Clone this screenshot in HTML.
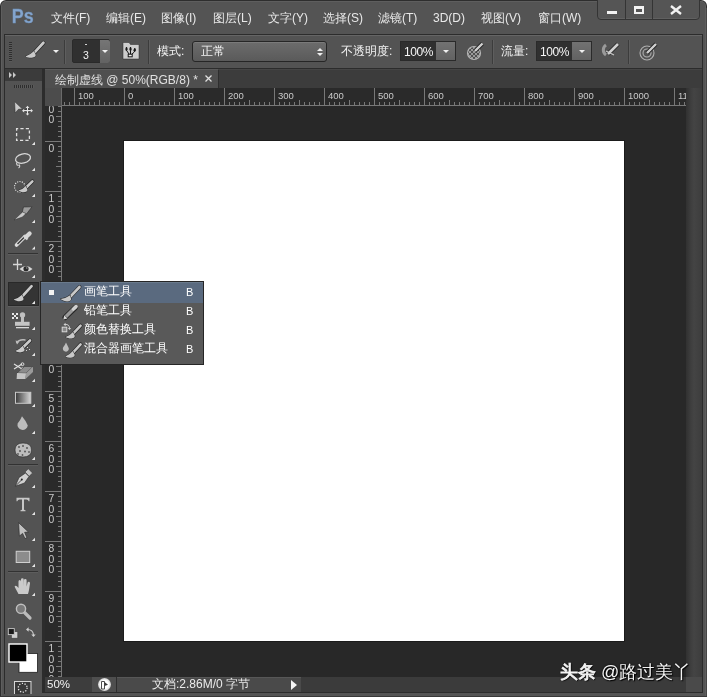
<!DOCTYPE html>
<html><head><meta charset="utf-8">
<style>
*{margin:0;padding:0;box-sizing:border-box}
html,body{width:707px;height:697px;overflow:hidden;background:#ffffff;font-family:'Liberation Sans', sans-serif;}
body{will-change:transform}
.lbl,.menu{will-change:transform}
.a{position:absolute}
.menu{position:absolute;top:11px;font-size:12px;color:#e9e9e9;white-space:nowrap;line-height:14px}
.lbl{position:absolute;font-size:12px;color:#f2f2f2;white-space:nowrap;line-height:14px}
.tri{position:absolute;width:0;height:0;border-left:3px solid transparent;border-bottom:3px solid #dcdcdc}
</style></head><body>

<div class="a" style="left:0;top:0;width:707px;height:697px;background:#2e2e2e;border-radius:6px 6px 0 0"></div>
<div class="a" style="left:1px;top:1px;width:705px;height:696px;background:#5e5e5e;border-radius:5px 5px 0 0"></div>
<div class="a" style="left:2px;top:2px;width:703px;height:695px;background:#545454;border-radius:4px 4px 0 0"></div>
<div class="a" style="left:706px;top:8px;width:1px;height:689px;background:#464646"></div>
<div class="a" style="left:0px;top:696px;width:707px;height:1px;background:#383838"></div>
<div class="menu" style="left:51px">文件(F)</div>
<div class="menu" style="left:106px">编辑(E)</div>
<div class="menu" style="left:161px">图像(I)</div>
<div class="menu" style="left:213px">图层(L)</div>
<div class="menu" style="left:268px">文字(Y)</div>
<div class="menu" style="left:323px">选择(S)</div>
<div class="menu" style="left:378px">滤镜(T)</div>
<div class="menu" style="left:433px">3D(D)</div>
<div class="menu" style="left:481px">视图(V)</div>
<div class="menu" style="left:538px">窗口(W)</div>
<svg class="a" style="left:0;top:0" width="40" height="30"><text x="14.2" y="22.8" font-family="Liberation Sans" font-weight="bold" font-size="20.8" fill="#84a5cd" stroke="#6d8fba" stroke-width="0.4" transform="translate(11.8 0) scale(0.86 1) translate(-14.2 0)">Ps</text></svg>
<div class="a" style="left:597px;top:-4px;width:103px;height:24px;border:1px solid #343434;border-radius:0 0 4px 4px;background:#555555;box-shadow:inset 0 -1px 0 #606060"></div>
<div class="a" style="left:625px;top:0;width:1px;height:19px;background:#343434"></div>
<div class="a" style="left:652px;top:0;width:1px;height:19px;background:#343434"></div>
<div class="a" style="left:607px;top:11px;width:10px;height:3px;background:#f2f2f2"></div>
<div class="a" style="left:634px;top:6px;width:10px;height:8px;border:2px solid #f2f2f2;border-top-width:3px"></div>
<svg class="a" style="left:669px;top:5px" width="14" height="10"><path d="M2 1 L12 9 M12 1 L2 9" stroke="#f2f2f2" stroke-width="2.4"/></svg>
<div class="a" style="left:4px;top:34px;width:699px;height:1px;background:#2c2c2c"></div>
<div class="a" style="left:4px;top:34px;width:1px;height:660px;background:#2c2c2c"></div>
<div class="a" style="left:702px;top:34px;width:1px;height:659px;background:#2c2c2c"></div>
<div class="a" style="left:42px;top:692px;width:661px;height:1px;background:#2c2c2c"></div>
<div class="a" style="left:5px;top:35px;width:697px;height:33px;background:#535353"></div>
<div class="a" style="left:5px;top:35px;width:697px;height:1px;background:#656565"></div>
<div class="a" style="left:4px;top:68px;width:699px;height:1px;background:#2c2c2c"></div>
<div class="a" style="left:9px;top:42px;width:3px;height:20px;background:repeating-linear-gradient(180deg,#2e2e2e 0,#2e2e2e 1px,#5a5a5a 1px,#5a5a5a 2px)"></div>
<svg class="a" style="left:0;top:0" width="70" height="68"><path d="M43.4 42.8 L34.6 52.4" stroke="#262626" stroke-width="4.1" stroke-linecap="round"/><path d="M43.4 42.8 L34.6 52.4" stroke="#c9c9c9" stroke-width="2.8" stroke-linecap="round"/><path d="M34.04 51.12 Q30.66 54.66 25.4 56.4 C29.83 59.05 36.37 57.74 35.64 54.78 Z" fill="#262626" stroke="#262626" stroke-width="0.9"/><path d="M34.04 51.12 Q30.66 54.66 25.4 56.4 C29.83 59.05 36.37 57.74 35.64 54.78 Z" fill="#c9c9c9"/></svg>
<div class="a" style="left:53px;top:50px;width:0;height:0;border-left:3px solid transparent;border-right:3px solid transparent;border-top:3px solid #f0f0f0"></div>
<div class="a" style="left:64px;top:40px;width:1px;height:24px;background:#3c3c3c"></div><div class="a" style="left:65px;top:40px;width:1px;height:24px;background:#5e5e5e"></div>
<div class="a" style="left:148px;top:40px;width:1px;height:24px;background:#3c3c3c"></div><div class="a" style="left:149px;top:40px;width:1px;height:24px;background:#5e5e5e"></div>
<div class="a" style="left:492px;top:40px;width:1px;height:24px;background:#3c3c3c"></div><div class="a" style="left:493px;top:40px;width:1px;height:24px;background:#5e5e5e"></div>
<div class="a" style="left:628px;top:40px;width:1px;height:24px;background:#3c3c3c"></div><div class="a" style="left:629px;top:40px;width:1px;height:24px;background:#5e5e5e"></div>
<div class="a" style="left:72px;top:39px;width:38px;height:24px;background:#303030;border:1px solid #2a2a2a;border-radius:2px"></div>
<div class="a" style="left:100px;top:40px;width:10px;height:23px;background:linear-gradient(#767676,#626262);border-radius:0 2px 2px 0"></div>
<div class="a" style="left:102px;top:50px;width:0;height:0;border-left:3px solid transparent;border-right:3px solid transparent;border-top:3px solid #f0f0f0"></div>
<div class="a" style="left:85px;top:43.5px;width:1.5px;height:1.5px;background:#d0d0d0"></div>
<div class="lbl" style="left:83px;top:47.5px;font-size:10.5px;color:#f4f4f4">3</div>
<svg class="a" style="left:0;top:0" width="150" height="68"><path d="M123 42.5 H129 L130.5 44.5 H139 V59 H123 Z" fill="#cdcdcd" stroke="#2a2a2a" stroke-width="0.5"/><path d="M126.5 47 Q125 49.5 126.5 51 Q128 49.5 126.5 47 Z M130.5 47 Q129 49.5 130.5 51 Q132 49.5 130.5 47 Z M134.8 48.2 Q133 50.5 134.5 51.8 Q136.5 50.5 134.8 48.2 Z" fill="#141414" stroke="#141414" stroke-width="0.9"/><path d="M127 51 L129 54 M130.5 51 V54 M134.3 52 L131.5 54.5" stroke="#141414" stroke-width="1"/><rect x="128.2" y="54.2" width="4" height="2.6" fill="#f0f0f0" stroke="#141414" stroke-width="1"/></svg>
<div class="lbl" style="left:157px;top:44px">模式:</div>
<div class="a" style="left:192px;top:41px;width:135px;height:21px;border:1px solid #262626;border-radius:3px;background:linear-gradient(#6c6c6c,#5a5a5a);box-shadow:inset 0 1px 0 #7a7a7a"></div>
<div class="lbl" style="left:201px;top:44px;color:#f2f2f2">正常</div>
<div class="a" style="left:317px;top:48px;width:0;height:0;border-left:3px solid transparent;border-right:3px solid transparent;border-bottom:3px solid #f0f0f0"></div>
<div class="a" style="left:317px;top:53px;width:0;height:0;border-left:3px solid transparent;border-right:3px solid transparent;border-top:3px solid #f0f0f0"></div>
<div class="lbl" style="left:341px;top:44px">不透明度:</div>
<div class="a" style="left:400px;top:41px;width:56px;height:20px;background:#303030;border:1px solid #2a2a2a"></div>
<div class="a" style="left:436px;top:42px;width:19px;height:18px;background:linear-gradient(#727272,#626262)"></div>
<div class="a" style="left:443px;top:50px;width:0;height:0;border-left:3px solid transparent;border-right:3px solid transparent;border-top:3px solid #f0f0f0"></div>
<div class="lbl" style="left:404px;top:45px;color:#f6f6f6;font-size:12px;letter-spacing:-0.4px">100%</div>
<svg class="a" style="left:465px;top:41px" width="22" height="21"><defs><pattern id="ck" width="4" height="4" patternUnits="userSpaceOnUse"><rect width="4" height="4" fill="#9a9a9a"/><rect width="2" height="2" fill="#505050"/><rect x="2" y="2" width="2" height="2" fill="#505050"/></pattern></defs><circle cx="9" cy="12" r="6.5" fill="url(#ck)" stroke="#b5b5b5" stroke-width="1.2"/><path d="M10 10 L17.5 2.5" stroke="#222" stroke-width="4"/><path d="M10 10 L17.5 2.5" stroke="#d0d0d0" stroke-width="2.4"/></svg>
<div class="lbl" style="left:501px;top:44px">流量:</div>
<div class="a" style="left:536px;top:41px;width:56px;height:20px;background:#303030;border:1px solid #2a2a2a"></div>
<div class="a" style="left:572px;top:42px;width:19px;height:18px;background:linear-gradient(#727272,#626262)"></div>
<div class="a" style="left:579px;top:50px;width:0;height:0;border-left:3px solid transparent;border-right:3px solid transparent;border-top:3px solid #f0f0f0"></div>
<div class="lbl" style="left:540px;top:45px;color:#f6f6f6;font-size:12px;letter-spacing:-0.4px">100%</div>
<svg class="a" style="left:600px;top:42px" width="22" height="16"><path d="M6 3 A6 6 0 0 0 6 13" stroke="#9a9a9a" stroke-width="3" fill="none"/><path d="M8 12 L18 2" stroke="#222" stroke-width="4.2"/><path d="M8 12 L18 2" stroke="#d0d0d0" stroke-width="2.6"/><path d="M6 9 L14 13" stroke="#c8c8c8" stroke-width="1.2"/></svg>
<svg class="a" style="left:638px;top:42px" width="22" height="20"><circle cx="9" cy="11" r="7" stroke="#b0b0b0" stroke-width="1.1" fill="none"/><circle cx="9" cy="11" r="4" stroke="#b0b0b0" stroke-width="1.1" fill="none"/><path d="M9 11 L18 2" stroke="#222" stroke-width="4"/><path d="M9 11 L18 2" stroke="#d0d0d0" stroke-width="2.4"/></svg>
<div class="a" style="left:5px;top:69px;width:37px;height:627px;background:#535353"></div>
<div class="a" style="left:5px;top:69px;width:37px;height:12px;background:#3b3b3b"></div>
<svg class="a" style="left:8px;top:71px" width="12" height="8"><path d="M1 1 L4 4 L1 7 Z M5 1 L8 4 L5 7 Z" fill="#c8c8c8"/></svg>
<div class="a" style="left:14px;top:85px;width:20px;height:3px;background:repeating-linear-gradient(90deg,#2e2e2e 0,#2e2e2e 1px,#5a5a5a 1px,#5a5a5a 2px)"></div>
<div class="a" style="left:42px;top:69px;width:3px;height:623px;background:#2c2c2c"></div>
<div class="a" style="left:45px;top:69px;width:657px;height:19px;background:#3c3c3c;border-top:1px solid #454545"></div>
<div class="a" style="left:45px;top:69px;width:174px;height:19px;background:#4f4f4f;border-top:1px solid #5a5a5a;border-right:1px solid #2e2e2e"></div>
<div class="lbl" style="left:55px;top:73px;color:#e0e0e0">绘制虚线 @ 50%(RGB/8) *</div>
<svg class="a" style="left:205px;top:75px" width="7" height="7"><path d="M0.5 0.5 L6.5 6.5 M6.5 0.5 L0.5 6.5" stroke="#e0e0e0" stroke-width="1.3"/></svg>
<div class="a" style="left:61px;top:106px;width:625px;height:571px;background:#282828"></div>
<div class="a" style="left:123px;top:140px;width:502px;height:502px;background:#1b1b1b"></div>
<div class="a" style="left:124px;top:141px;width:500px;height:500px;background:#ffffff"></div>
<div class="a" style="left:45px;top:88px;width:16px;height:18px;background:#4c4c4c"></div>
<svg class="a" style="left:61px;top:88px" width="625" height="18"><rect x="0" y="0" width="625" height="18" fill="#2a2a2a"/><rect x="0" y="17" width="625" height="1" fill="#787878"/><rect x="0" y="0" width="1" height="18" fill="#6a6a6a"/><rect x="3" y="14" width="1" height="4" fill="#787878"/><rect x="8" y="14" width="1" height="4" fill="#787878"/><rect x="13" y="0" width="1" height="18" fill="#787878"/><text x="17" y="10.5" fill="#cacaca" font-size="9.5" font-family="Liberation Sans">100</text><rect x="18" y="14" width="1" height="4" fill="#787878"/><rect x="23" y="14" width="1" height="4" fill="#787878"/><rect x="28" y="14" width="1" height="4" fill="#787878"/><rect x="33" y="14" width="1" height="4" fill="#787878"/><rect x="38" y="12" width="1" height="6" fill="#787878"/><rect x="43" y="14" width="1" height="4" fill="#787878"/><rect x="48" y="14" width="1" height="4" fill="#787878"/><rect x="53" y="14" width="1" height="4" fill="#787878"/><rect x="58" y="14" width="1" height="4" fill="#787878"/><rect x="63" y="0" width="1" height="18" fill="#787878"/><text x="67" y="10.5" fill="#cacaca" font-size="9.5" font-family="Liberation Sans">0</text><rect x="68" y="14" width="1" height="4" fill="#787878"/><rect x="73" y="14" width="1" height="4" fill="#787878"/><rect x="78" y="14" width="1" height="4" fill="#787878"/><rect x="83" y="14" width="1" height="4" fill="#787878"/><rect x="88" y="12" width="1" height="6" fill="#787878"/><rect x="93" y="14" width="1" height="4" fill="#787878"/><rect x="98" y="14" width="1" height="4" fill="#787878"/><rect x="103" y="14" width="1" height="4" fill="#787878"/><rect x="108" y="14" width="1" height="4" fill="#787878"/><rect x="113" y="0" width="1" height="18" fill="#787878"/><text x="117" y="10.5" fill="#cacaca" font-size="9.5" font-family="Liberation Sans">100</text><rect x="118" y="14" width="1" height="4" fill="#787878"/><rect x="123" y="14" width="1" height="4" fill="#787878"/><rect x="128" y="14" width="1" height="4" fill="#787878"/><rect x="133" y="14" width="1" height="4" fill="#787878"/><rect x="138" y="12" width="1" height="6" fill="#787878"/><rect x="143" y="14" width="1" height="4" fill="#787878"/><rect x="148" y="14" width="1" height="4" fill="#787878"/><rect x="153" y="14" width="1" height="4" fill="#787878"/><rect x="158" y="14" width="1" height="4" fill="#787878"/><rect x="163" y="0" width="1" height="18" fill="#787878"/><text x="167" y="10.5" fill="#cacaca" font-size="9.5" font-family="Liberation Sans">200</text><rect x="168" y="14" width="1" height="4" fill="#787878"/><rect x="173" y="14" width="1" height="4" fill="#787878"/><rect x="178" y="14" width="1" height="4" fill="#787878"/><rect x="183" y="14" width="1" height="4" fill="#787878"/><rect x="188" y="12" width="1" height="6" fill="#787878"/><rect x="193" y="14" width="1" height="4" fill="#787878"/><rect x="198" y="14" width="1" height="4" fill="#787878"/><rect x="203" y="14" width="1" height="4" fill="#787878"/><rect x="208" y="14" width="1" height="4" fill="#787878"/><rect x="213" y="0" width="1" height="18" fill="#787878"/><text x="217" y="10.5" fill="#cacaca" font-size="9.5" font-family="Liberation Sans">300</text><rect x="218" y="14" width="1" height="4" fill="#787878"/><rect x="223" y="14" width="1" height="4" fill="#787878"/><rect x="228" y="14" width="1" height="4" fill="#787878"/><rect x="233" y="14" width="1" height="4" fill="#787878"/><rect x="238" y="12" width="1" height="6" fill="#787878"/><rect x="243" y="14" width="1" height="4" fill="#787878"/><rect x="248" y="14" width="1" height="4" fill="#787878"/><rect x="253" y="14" width="1" height="4" fill="#787878"/><rect x="258" y="14" width="1" height="4" fill="#787878"/><rect x="263" y="0" width="1" height="18" fill="#787878"/><text x="267" y="10.5" fill="#cacaca" font-size="9.5" font-family="Liberation Sans">400</text><rect x="268" y="14" width="1" height="4" fill="#787878"/><rect x="273" y="14" width="1" height="4" fill="#787878"/><rect x="278" y="14" width="1" height="4" fill="#787878"/><rect x="283" y="14" width="1" height="4" fill="#787878"/><rect x="288" y="12" width="1" height="6" fill="#787878"/><rect x="293" y="14" width="1" height="4" fill="#787878"/><rect x="298" y="14" width="1" height="4" fill="#787878"/><rect x="303" y="14" width="1" height="4" fill="#787878"/><rect x="308" y="14" width="1" height="4" fill="#787878"/><rect x="313" y="0" width="1" height="18" fill="#787878"/><text x="317" y="10.5" fill="#cacaca" font-size="9.5" font-family="Liberation Sans">500</text><rect x="318" y="14" width="1" height="4" fill="#787878"/><rect x="323" y="14" width="1" height="4" fill="#787878"/><rect x="328" y="14" width="1" height="4" fill="#787878"/><rect x="333" y="14" width="1" height="4" fill="#787878"/><rect x="338" y="12" width="1" height="6" fill="#787878"/><rect x="343" y="14" width="1" height="4" fill="#787878"/><rect x="348" y="14" width="1" height="4" fill="#787878"/><rect x="353" y="14" width="1" height="4" fill="#787878"/><rect x="358" y="14" width="1" height="4" fill="#787878"/><rect x="363" y="0" width="1" height="18" fill="#787878"/><text x="367" y="10.5" fill="#cacaca" font-size="9.5" font-family="Liberation Sans">600</text><rect x="368" y="14" width="1" height="4" fill="#787878"/><rect x="373" y="14" width="1" height="4" fill="#787878"/><rect x="378" y="14" width="1" height="4" fill="#787878"/><rect x="383" y="14" width="1" height="4" fill="#787878"/><rect x="388" y="12" width="1" height="6" fill="#787878"/><rect x="393" y="14" width="1" height="4" fill="#787878"/><rect x="398" y="14" width="1" height="4" fill="#787878"/><rect x="403" y="14" width="1" height="4" fill="#787878"/><rect x="408" y="14" width="1" height="4" fill="#787878"/><rect x="413" y="0" width="1" height="18" fill="#787878"/><text x="417" y="10.5" fill="#cacaca" font-size="9.5" font-family="Liberation Sans">700</text><rect x="418" y="14" width="1" height="4" fill="#787878"/><rect x="423" y="14" width="1" height="4" fill="#787878"/><rect x="428" y="14" width="1" height="4" fill="#787878"/><rect x="433" y="14" width="1" height="4" fill="#787878"/><rect x="438" y="12" width="1" height="6" fill="#787878"/><rect x="443" y="14" width="1" height="4" fill="#787878"/><rect x="448" y="14" width="1" height="4" fill="#787878"/><rect x="453" y="14" width="1" height="4" fill="#787878"/><rect x="458" y="14" width="1" height="4" fill="#787878"/><rect x="463" y="0" width="1" height="18" fill="#787878"/><text x="467" y="10.5" fill="#cacaca" font-size="9.5" font-family="Liberation Sans">800</text><rect x="468" y="14" width="1" height="4" fill="#787878"/><rect x="473" y="14" width="1" height="4" fill="#787878"/><rect x="478" y="14" width="1" height="4" fill="#787878"/><rect x="483" y="14" width="1" height="4" fill="#787878"/><rect x="488" y="12" width="1" height="6" fill="#787878"/><rect x="493" y="14" width="1" height="4" fill="#787878"/><rect x="498" y="14" width="1" height="4" fill="#787878"/><rect x="503" y="14" width="1" height="4" fill="#787878"/><rect x="508" y="14" width="1" height="4" fill="#787878"/><rect x="513" y="0" width="1" height="18" fill="#787878"/><text x="517" y="10.5" fill="#cacaca" font-size="9.5" font-family="Liberation Sans">900</text><rect x="518" y="14" width="1" height="4" fill="#787878"/><rect x="523" y="14" width="1" height="4" fill="#787878"/><rect x="528" y="14" width="1" height="4" fill="#787878"/><rect x="533" y="14" width="1" height="4" fill="#787878"/><rect x="538" y="12" width="1" height="6" fill="#787878"/><rect x="543" y="14" width="1" height="4" fill="#787878"/><rect x="548" y="14" width="1" height="4" fill="#787878"/><rect x="553" y="14" width="1" height="4" fill="#787878"/><rect x="558" y="14" width="1" height="4" fill="#787878"/><rect x="563" y="0" width="1" height="18" fill="#787878"/><text x="567" y="10.5" fill="#cacaca" font-size="9.5" font-family="Liberation Sans">1000</text><rect x="568" y="14" width="1" height="4" fill="#787878"/><rect x="573" y="14" width="1" height="4" fill="#787878"/><rect x="578" y="14" width="1" height="4" fill="#787878"/><rect x="583" y="14" width="1" height="4" fill="#787878"/><rect x="588" y="12" width="1" height="6" fill="#787878"/><rect x="593" y="14" width="1" height="4" fill="#787878"/><rect x="598" y="14" width="1" height="4" fill="#787878"/><rect x="603" y="14" width="1" height="4" fill="#787878"/><rect x="608" y="14" width="1" height="4" fill="#787878"/><rect x="613" y="0" width="1" height="18" fill="#787878"/><text x="617" y="10.5" fill="#cacaca" font-size="9.5" font-family="Liberation Sans">1100</text><rect x="618" y="14" width="1" height="4" fill="#787878"/><rect x="623" y="14" width="1" height="4" fill="#787878"/></svg>
<svg class="a" style="left:45px;top:106px" width="17" height="571"><rect x="0" y="0" width="17" height="571" fill="#2a2a2a"/><rect x="16" y="0" width="1" height="571" fill="#787878"/><rect x="11" y="-40" width="5" height="1" fill="#787878"/><rect x="13" y="-35" width="3" height="1" fill="#787878"/><rect x="13" y="-30" width="3" height="1" fill="#787878"/><rect x="13" y="-25" width="3" height="1" fill="#787878"/><rect x="13" y="-20" width="3" height="1" fill="#787878"/><rect x="0" y="-15" width="17" height="1" fill="#787878"/><text x="3.5" y="-3.6999999999999993" fill="#cacaca" font-size="10.3" font-family="Liberation Sans">1</text><text x="3.5" y="6.600000000000001" fill="#cacaca" font-size="10.3" font-family="Liberation Sans">0</text><text x="3.5" y="16.900000000000002" fill="#cacaca" font-size="10.3" font-family="Liberation Sans">0</text><rect x="13" y="-10" width="3" height="1" fill="#787878"/><rect x="13" y="-5" width="3" height="1" fill="#787878"/><rect x="13" y="0" width="3" height="1" fill="#787878"/><rect x="13" y="5" width="3" height="1" fill="#787878"/><rect x="11" y="10" width="5" height="1" fill="#787878"/><rect x="13" y="15" width="3" height="1" fill="#787878"/><rect x="13" y="20" width="3" height="1" fill="#787878"/><rect x="13" y="25" width="3" height="1" fill="#787878"/><rect x="13" y="30" width="3" height="1" fill="#787878"/><rect x="0" y="35" width="17" height="1" fill="#787878"/><text x="3.5" y="46.3" fill="#cacaca" font-size="10.3" font-family="Liberation Sans">0</text><rect x="13" y="40" width="3" height="1" fill="#787878"/><rect x="13" y="45" width="3" height="1" fill="#787878"/><rect x="13" y="50" width="3" height="1" fill="#787878"/><rect x="13" y="55" width="3" height="1" fill="#787878"/><rect x="11" y="60" width="5" height="1" fill="#787878"/><rect x="13" y="65" width="3" height="1" fill="#787878"/><rect x="13" y="70" width="3" height="1" fill="#787878"/><rect x="13" y="75" width="3" height="1" fill="#787878"/><rect x="13" y="80" width="3" height="1" fill="#787878"/><rect x="0" y="85" width="17" height="1" fill="#787878"/><text x="3.5" y="96.3" fill="#cacaca" font-size="10.3" font-family="Liberation Sans">1</text><text x="3.5" y="106.6" fill="#cacaca" font-size="10.3" font-family="Liberation Sans">0</text><text x="3.5" y="116.9" fill="#cacaca" font-size="10.3" font-family="Liberation Sans">0</text><rect x="13" y="90" width="3" height="1" fill="#787878"/><rect x="13" y="95" width="3" height="1" fill="#787878"/><rect x="13" y="100" width="3" height="1" fill="#787878"/><rect x="13" y="105" width="3" height="1" fill="#787878"/><rect x="11" y="110" width="5" height="1" fill="#787878"/><rect x="13" y="115" width="3" height="1" fill="#787878"/><rect x="13" y="120" width="3" height="1" fill="#787878"/><rect x="13" y="125" width="3" height="1" fill="#787878"/><rect x="13" y="130" width="3" height="1" fill="#787878"/><rect x="0" y="135" width="17" height="1" fill="#787878"/><text x="3.5" y="146.3" fill="#cacaca" font-size="10.3" font-family="Liberation Sans">2</text><text x="3.5" y="156.60000000000002" fill="#cacaca" font-size="10.3" font-family="Liberation Sans">0</text><text x="3.5" y="166.9" fill="#cacaca" font-size="10.3" font-family="Liberation Sans">0</text><rect x="13" y="140" width="3" height="1" fill="#787878"/><rect x="13" y="145" width="3" height="1" fill="#787878"/><rect x="13" y="150" width="3" height="1" fill="#787878"/><rect x="13" y="155" width="3" height="1" fill="#787878"/><rect x="11" y="160" width="5" height="1" fill="#787878"/><rect x="13" y="165" width="3" height="1" fill="#787878"/><rect x="13" y="170" width="3" height="1" fill="#787878"/><rect x="13" y="175" width="3" height="1" fill="#787878"/><rect x="13" y="180" width="3" height="1" fill="#787878"/><rect x="0" y="185" width="17" height="1" fill="#787878"/><text x="3.5" y="196.3" fill="#cacaca" font-size="10.3" font-family="Liberation Sans">3</text><text x="3.5" y="206.60000000000002" fill="#cacaca" font-size="10.3" font-family="Liberation Sans">0</text><text x="3.5" y="216.9" fill="#cacaca" font-size="10.3" font-family="Liberation Sans">0</text><rect x="13" y="190" width="3" height="1" fill="#787878"/><rect x="13" y="195" width="3" height="1" fill="#787878"/><rect x="13" y="200" width="3" height="1" fill="#787878"/><rect x="13" y="205" width="3" height="1" fill="#787878"/><rect x="11" y="210" width="5" height="1" fill="#787878"/><rect x="13" y="215" width="3" height="1" fill="#787878"/><rect x="13" y="220" width="3" height="1" fill="#787878"/><rect x="13" y="225" width="3" height="1" fill="#787878"/><rect x="13" y="230" width="3" height="1" fill="#787878"/><rect x="0" y="235" width="17" height="1" fill="#787878"/><text x="3.5" y="246.3" fill="#cacaca" font-size="10.3" font-family="Liberation Sans">4</text><text x="3.5" y="256.6" fill="#cacaca" font-size="10.3" font-family="Liberation Sans">0</text><text x="3.5" y="266.90000000000003" fill="#cacaca" font-size="10.3" font-family="Liberation Sans">0</text><rect x="13" y="240" width="3" height="1" fill="#787878"/><rect x="13" y="245" width="3" height="1" fill="#787878"/><rect x="13" y="250" width="3" height="1" fill="#787878"/><rect x="13" y="255" width="3" height="1" fill="#787878"/><rect x="11" y="260" width="5" height="1" fill="#787878"/><rect x="13" y="265" width="3" height="1" fill="#787878"/><rect x="13" y="270" width="3" height="1" fill="#787878"/><rect x="13" y="275" width="3" height="1" fill="#787878"/><rect x="13" y="280" width="3" height="1" fill="#787878"/><rect x="0" y="285" width="17" height="1" fill="#787878"/><text x="3.5" y="296.3" fill="#cacaca" font-size="10.3" font-family="Liberation Sans">5</text><text x="3.5" y="306.6" fill="#cacaca" font-size="10.3" font-family="Liberation Sans">0</text><text x="3.5" y="316.90000000000003" fill="#cacaca" font-size="10.3" font-family="Liberation Sans">0</text><rect x="13" y="290" width="3" height="1" fill="#787878"/><rect x="13" y="295" width="3" height="1" fill="#787878"/><rect x="13" y="300" width="3" height="1" fill="#787878"/><rect x="13" y="305" width="3" height="1" fill="#787878"/><rect x="11" y="310" width="5" height="1" fill="#787878"/><rect x="13" y="315" width="3" height="1" fill="#787878"/><rect x="13" y="320" width="3" height="1" fill="#787878"/><rect x="13" y="325" width="3" height="1" fill="#787878"/><rect x="13" y="330" width="3" height="1" fill="#787878"/><rect x="0" y="335" width="17" height="1" fill="#787878"/><text x="3.5" y="346.3" fill="#cacaca" font-size="10.3" font-family="Liberation Sans">6</text><text x="3.5" y="356.6" fill="#cacaca" font-size="10.3" font-family="Liberation Sans">0</text><text x="3.5" y="366.90000000000003" fill="#cacaca" font-size="10.3" font-family="Liberation Sans">0</text><rect x="13" y="340" width="3" height="1" fill="#787878"/><rect x="13" y="345" width="3" height="1" fill="#787878"/><rect x="13" y="350" width="3" height="1" fill="#787878"/><rect x="13" y="355" width="3" height="1" fill="#787878"/><rect x="11" y="360" width="5" height="1" fill="#787878"/><rect x="13" y="365" width="3" height="1" fill="#787878"/><rect x="13" y="370" width="3" height="1" fill="#787878"/><rect x="13" y="375" width="3" height="1" fill="#787878"/><rect x="13" y="380" width="3" height="1" fill="#787878"/><rect x="0" y="385" width="17" height="1" fill="#787878"/><text x="3.5" y="396.3" fill="#cacaca" font-size="10.3" font-family="Liberation Sans">7</text><text x="3.5" y="406.6" fill="#cacaca" font-size="10.3" font-family="Liberation Sans">0</text><text x="3.5" y="416.90000000000003" fill="#cacaca" font-size="10.3" font-family="Liberation Sans">0</text><rect x="13" y="390" width="3" height="1" fill="#787878"/><rect x="13" y="395" width="3" height="1" fill="#787878"/><rect x="13" y="400" width="3" height="1" fill="#787878"/><rect x="13" y="405" width="3" height="1" fill="#787878"/><rect x="11" y="410" width="5" height="1" fill="#787878"/><rect x="13" y="415" width="3" height="1" fill="#787878"/><rect x="13" y="420" width="3" height="1" fill="#787878"/><rect x="13" y="425" width="3" height="1" fill="#787878"/><rect x="13" y="430" width="3" height="1" fill="#787878"/><rect x="0" y="435" width="17" height="1" fill="#787878"/><text x="3.5" y="446.3" fill="#cacaca" font-size="10.3" font-family="Liberation Sans">8</text><text x="3.5" y="456.6" fill="#cacaca" font-size="10.3" font-family="Liberation Sans">0</text><text x="3.5" y="466.90000000000003" fill="#cacaca" font-size="10.3" font-family="Liberation Sans">0</text><rect x="13" y="440" width="3" height="1" fill="#787878"/><rect x="13" y="445" width="3" height="1" fill="#787878"/><rect x="13" y="450" width="3" height="1" fill="#787878"/><rect x="13" y="455" width="3" height="1" fill="#787878"/><rect x="11" y="460" width="5" height="1" fill="#787878"/><rect x="13" y="465" width="3" height="1" fill="#787878"/><rect x="13" y="470" width="3" height="1" fill="#787878"/><rect x="13" y="475" width="3" height="1" fill="#787878"/><rect x="13" y="480" width="3" height="1" fill="#787878"/><rect x="0" y="485" width="17" height="1" fill="#787878"/><text x="3.5" y="496.3" fill="#cacaca" font-size="10.3" font-family="Liberation Sans">9</text><text x="3.5" y="506.6" fill="#cacaca" font-size="10.3" font-family="Liberation Sans">0</text><text x="3.5" y="516.9" fill="#cacaca" font-size="10.3" font-family="Liberation Sans">0</text><rect x="13" y="490" width="3" height="1" fill="#787878"/><rect x="13" y="495" width="3" height="1" fill="#787878"/><rect x="13" y="500" width="3" height="1" fill="#787878"/><rect x="13" y="505" width="3" height="1" fill="#787878"/><rect x="11" y="510" width="5" height="1" fill="#787878"/><rect x="13" y="515" width="3" height="1" fill="#787878"/><rect x="13" y="520" width="3" height="1" fill="#787878"/><rect x="13" y="525" width="3" height="1" fill="#787878"/><rect x="13" y="530" width="3" height="1" fill="#787878"/><rect x="0" y="535" width="17" height="1" fill="#787878"/><text x="3.5" y="546.3" fill="#cacaca" font-size="10.3" font-family="Liberation Sans">1</text><text x="3.5" y="556.5999999999999" fill="#cacaca" font-size="10.3" font-family="Liberation Sans">0</text><text x="3.5" y="566.9" fill="#cacaca" font-size="10.3" font-family="Liberation Sans">0</text><text x="3.5" y="577.1999999999999" fill="#cacaca" font-size="10.3" font-family="Liberation Sans">0</text><rect x="13" y="540" width="3" height="1" fill="#787878"/><rect x="13" y="545" width="3" height="1" fill="#787878"/><rect x="13" y="550" width="3" height="1" fill="#787878"/><rect x="13" y="555" width="3" height="1" fill="#787878"/><rect x="11" y="560" width="5" height="1" fill="#787878"/><rect x="13" y="565" width="3" height="1" fill="#787878"/><rect x="13" y="570" width="3" height="1" fill="#787878"/></svg>
<div class="a" style="left:686px;top:88px;width:16px;height:589px;background:linear-gradient(90deg,#313131,#3e3e3e 30%,#444 50%,#3d3d3d)"></div>
<div class="a" style="left:686px;top:677px;width:16px;height:15px;background:#4a4a4a"></div>
<div class="a" style="left:45px;top:677px;width:641px;height:15px;background:#3b3b3b"></div>
<div class="a" style="left:45px;top:677px;width:47px;height:15px;background:#3d3d3d"></div>
<div class="a" style="left:92px;top:677px;width:24px;height:15px;background:#4e4e4e"></div>
<div class="a" style="left:117px;top:677px;width:184px;height:15px;background:#4a4a4a;border-top:1px solid #575757"></div>
<div class="a" style="left:116px;top:677px;width:1px;height:15px;background:#2e2e2e"></div>
<div class="a" style="left:98px;top:678px;width:13px;height:13px;border-radius:50%;background:radial-gradient(#ffffff 45%,#d8d8d8 65%,rgba(90,90,90,0) 100%)"></div>
<svg class="a" style="left:0;top:0" width="120" height="697"><path d="M101.5 681.5 H104.5 V689 H101.5 Z" fill="none" stroke="#3a3a3a" stroke-width="0.9"/><path d="M104.5 682 L108 684.8 L104.5 686" fill="#3a3a3a"/></svg>
<div class="lbl" style="left:47px;top:677px;font-size:11.5px;color:#f2f2f2">50%</div>
<div class="lbl" style="left:152px;top:677px;font-size:12px;color:#ececec">文档:2.86M/0 字节</div>
<div class="a" style="left:291px;top:680px;width:0;height:0;border-top:5px solid transparent;border-bottom:5px solid transparent;border-left:6px solid #f4f4f4"></div>
<svg class="a" style="left:0;top:0" width="707" height="697"><path d="M14.6 101.6 L22.4 109 L18.4 109.3 L15.2 113 Z" fill="#cacaca" stroke="#2a2a2a" stroke-width="0.5" stroke-linejoin="round"/><path d="M27.5 107.5 V114 M23.8 110.7 H31.2" stroke="#262626" stroke-width="2.6"/><path d="M27.5 107.5 V114 M23.8 110.7 H31.2" stroke="#e4e4e4" stroke-width="1.3"/><path d="M25.6 108 L27.5 105.8 L29.4 108 Z M25.6 113.4 L27.5 115.6 L29.4 113.4 Z M24.2 108.8 L22 110.7 L24.2 112.6 Z M30.8 108.8 L33 110.7 L30.8 112.6 Z" fill="#e4e4e4"/><rect x="16.6" y="128.6" width="12.8" height="11.8" fill="none" stroke="#e0e0e0" stroke-width="1.3" stroke-dasharray="3.2 2.2" stroke-dashoffset="1.6"/><path d="M35 145 L35 141.8 L31.8 145 Z" fill="#e6e6e6"/><ellipse cx="23" cy="158.5" rx="7.6" ry="4.6" transform="rotate(-14 23 158.5)" fill="none" stroke="#d8d8d8" stroke-width="1.3"/><path d="M17.5 162 C15.5 164 17 166 19.5 165 C20 166.5 19.5 167.5 18.5 168" fill="none" stroke="#d0d0d0" stroke-width="1.1"/><path d="M35 171 L35 167.8 L31.8 171 Z" fill="#e6e6e6"/><circle cx="19.8" cy="186.8" r="5.3" fill="none" stroke="#e0e0e0" stroke-width="1.2" stroke-dasharray="1.1 1.3"/><path d="M32.4 181.4 L26.4 187.2" stroke="#262626" stroke-width="3.9000000000000004" stroke-linecap="round"/><path d="M32.4 181.4 L26.4 187.2" stroke="#c9c9c9" stroke-width="2.6" stroke-linecap="round"/><path d="M25.86 185.91 Q22.90 189.19 18.2 190.6 C22.27 193.46 28.13 192.54 27.40 189.60 Z" fill="#262626" stroke="#262626" stroke-width="0.9"/><path d="M25.86 185.91 Q22.90 189.19 18.2 190.6 C22.27 193.46 28.13 192.54 27.40 189.60 Z" fill="#c9c9c9"/><path d="M35 197 L35 193.8 L31.8 197 Z" fill="#e6e6e6"/><path d="M23.5 207 L32 206.8 L26.5 214 L22 213 Z" fill="#9c9c9c" stroke="#2a2a2a" stroke-width="0.6"/><path d="M14 220 L22.5 212 L26 213.5 L22.5 217 Z" fill="#c9c9c9" stroke="#2a2a2a" stroke-width="0.5"/><path d="M35 223 L35 219.8 L31.8 223 Z" fill="#e6e6e6"/><path d="M16.5 245 L25 236.5" stroke="#dcdcdc" stroke-width="3.6" stroke-linecap="round"/><path d="M17.5 244 L24.5 237" stroke="#3a3a3a" stroke-width="1.4"/><path d="M23.5 235.5 L27.5 239.5" stroke="#cfcfcf" stroke-width="2.4"/><path d="M26 237 L29.6 233.4" stroke="#d6d6d6" stroke-width="4.2" stroke-linecap="round"/><path d="M35 249.5 L35 246.3 L31.8 249.5 Z" fill="#e6e6e6"/><rect x="8" y="253" width="30" height="1" fill="#323232"/><rect x="8" y="254" width="30" height="1" fill="#5d5d5d"/><path d="M17.5 259 V270 M13 264.5 H22" stroke="#d6d6d6" stroke-width="1.3"/><path d="M19.5 269 Q26 263 32.5 269 Q26 275 19.5 269 Z" fill="#d8d8d8"/><circle cx="26" cy="268.8" r="2.6" fill="#2c2c2c"/><circle cx="26.8" cy="268" r="0.8" fill="#9a9a9a"/><path d="M35 278 L35 274.8 L31.8 278 Z" fill="#e6e6e6"/><rect x="8.5" y="282.5" width="30" height="23" fill="#343434" stroke="#292929" stroke-width="1"/><rect x="8" y="306" width="31" height="1" fill="#5f5f5f"/><path d="M31.6 286.2 L22.6 296" stroke="#262626" stroke-width="3.9000000000000004" stroke-linecap="round"/><path d="M31.6 286.2 L22.6 296" stroke="#c9c9c9" stroke-width="2.6" stroke-linecap="round"/><path d="M22.11 294.69 Q18.73 298.00 13.6 299.4 C17.78 302.31 24.13 301.41 23.52 298.43 Z" fill="#262626" stroke="#262626" stroke-width="0.9"/><path d="M22.11 294.69 Q18.73 298.00 13.6 299.4 C17.78 302.31 24.13 301.41 23.52 298.43 Z" fill="#c9c9c9"/><path d="M35 304 L35 300.8 L31.8 304 Z" fill="#e6e6e6"/><g fill="#e8e8e8"><rect x="12" y="313" width="2" height="2"/><rect x="16" y="313" width="2" height="2"/><rect x="14" y="315" width="2" height="2"/><rect x="12" y="317" width="2" height="2"/><rect x="16" y="317" width="2" height="2"/></g><circle cx="22.5" cy="315" r="2.7" fill="#c0c0c0"/><rect x="21" y="316" width="3" height="6" fill="#c0c0c0"/><rect x="15" y="321.8" width="14.6" height="4" fill="#c4c4c4"/><rect x="16" y="327" width="13" height="1.3" fill="#d8d8d8"/><path d="M35 330 L35 326.8 L31.8 330 Z" fill="#e6e6e6"/><path d="M16.5 343 Q19 339 25.5 340" stroke="#bdbdbd" stroke-width="1.6" fill="none"/><path d="M15.5 340.5 L17 344.5 L19.5 341.5 Z" fill="#bdbdbd"/><path d="M30 340.5 L23.4 347" stroke="#262626" stroke-width="3.9000000000000004" stroke-linecap="round"/><path d="M30 340.5 L23.4 347" stroke="#c9c9c9" stroke-width="2.6" stroke-linecap="round"/><path d="M22.80 345.74 Q19.83 349.25 15 351 C19.33 353.59 25.39 352.26 24.52 349.35 Z" fill="#262626" stroke="#262626" stroke-width="0.9"/><path d="M22.80 345.74 Q19.83 349.25 15 351 C19.33 353.59 25.39 352.26 24.52 349.35 Z" fill="#c9c9c9"/><g fill="#d0d0d0"><rect x="27" y="347" width="1" height="1"/><rect x="29" y="349" width="1" height="1"/><rect x="26" y="350" width="1" height="1"/></g><path d="M35 356 L35 352.8 L31.8 356 Z" fill="#e6e6e6"/><path d="M14 364 L22 369 M14 369 L22 364" stroke="#e0e0e0" stroke-width="1.1"/><circle cx="22.5" cy="364.2" r="1.4" fill="none" stroke="#e0e0e0" stroke-width="1"/><circle cx="22.5" cy="369.2" r="1.4" fill="none" stroke="#e0e0e0" stroke-width="1"/><path d="M17 373 L24.5 366.5 L33 366.5 L26 373.2 Z" fill="#8c8c8c" stroke="#2e2e2e" stroke-width="0.5"/><path d="M17 373 L26 373.2 L25.5 379 L16.6 379 Z" fill="#c4c4c4"/><path d="M26 373.2 L33 366.5 L33 372 L25.5 379 Z" fill="#9a9a9a"/><path d="M35 382 L35 378.8 L31.8 382 Z" fill="#e6e6e6"/><defs><linearGradient id="gr" x1="0" x2="1" y1="0" y2="0"><stop offset="0" stop-color="#3a3a3a"/><stop offset="1" stop-color="#d8d8d8"/></linearGradient><linearGradient id="sh" x1="0" x2="0" y1="0" y2="1"><stop offset="0" stop-color="#7a7a7a"/><stop offset="1" stop-color="#9a9a9a"/></linearGradient></defs><rect x="15.5" y="392.3" width="15.3" height="11" fill="url(#gr)" stroke="#c8c8c8" stroke-width="1"/><path d="M35 407 L35 403.8 L31.8 407 Z" fill="#e6e6e6"/><path d="M22 416.3 Q20 421 17.6 423.5 A5.2 5.2 0 1 0 27.8 425.5 Q26 421 22 416.3 Z" fill="#bdbdbd"/><path d="M35 434 L35 430.8 L31.8 434 Z" fill="#e6e6e6"/><path d="M15 450 Q15 443 23 443 Q31.5 443 31.5 450 Q31.5 457 23 457 Q15 457 15 450 Z" fill="#bcbcbc" stroke="#2a2a2a" stroke-width="0.6"/><g fill="#5a5a5a"><circle cx="19" cy="447" r="1"/><circle cx="23" cy="446" r="1"/><circle cx="27" cy="448" r="1"/><circle cx="20" cy="451" r="1"/><circle cx="25" cy="451.5" r="1"/><circle cx="29" cy="452" r="0.9"/><circle cx="18" cy="454" r="0.9"/><circle cx="22.5" cy="455" r="0.9"/></g><path d="M35 460 L35 456.8 L31.8 460 Z" fill="#e6e6e6"/><rect x="8" y="464" width="30" height="1" fill="#323232"/><rect x="8" y="465" width="30" height="1" fill="#5d5d5d"/><path d="M15.2 486.3 L19 477.5 L25.5 473 L29 476.5 L24.5 483 Z" fill="#d0d0d0" stroke="#2a2a2a" stroke-width="0.6"/><path d="M15.5 486 L21.5 480" stroke="#3a3a3a" stroke-width="0.9"/><circle cx="21.8" cy="479.6" r="1" fill="#222"/><path d="M25 472 L28.3 468.8 L32.5 473 L29.2 476.3 Z" fill="#c4c4c4" stroke="#2a2a2a" stroke-width="0.5"/><path d="M35 488 L35 484.8 L31.8 488 Z" fill="#e6e6e6"/><path d="M16.5 497.8 H29.5 V501.3 H28.7 Q28.3 499.4 26.5 499.4 H24 V509.6 Q24 510.3 25.5 510.3 V511.2 H20.5 V510.3 Q22 510.3 22 509.6 V499.4 H19.5 Q17.7 499.4 17.3 501.3 H16.5 Z" fill="#c8c8c8"/><path d="M35 515 L35 511.8 L31.8 515 Z" fill="#e6e6e6"/><path d="M18.6 522.7 L28.4 532 L24.6 532.3 L26.8 537.6 L25 538.6 L22.6 533.4 L19.4 536 Z" fill="#c0c0c0" stroke="#262626" stroke-width="0.6"/><path d="M35 541 L35 537.8 L31.8 541 Z" fill="#e6e6e6"/><rect x="16.2" y="551.3" width="13.5" height="11.2" fill="#8c8c8c" stroke="#d0d0d0" stroke-width="1"/><path d="M35 567 L35 563.8 L31.8 567 Z" fill="#e6e6e6"/><rect x="8" y="571" width="30" height="1" fill="#323232"/><rect x="8" y="572" width="30" height="1" fill="#5d5d5d"/><path d="M18.5 594 L15 587.5 Q14 586 15.5 585.8 Q16.8 585.8 18.5 588 L18.5 581.5 Q18.5 580 19.8 580 Q21 580 21 581.5 L21 586 L21 579.5 Q21 578.2 22.4 578.2 Q23.7 578.2 23.7 579.5 L23.7 586 L23.9 580.2 Q24 579 25.3 579 Q26.6 579 26.6 580.3 L26.6 586.5 L27.6 582.6 Q28 581.5 29.2 581.8 Q30.2 582.2 30 583.5 L29 590 Q28.5 592.5 28 594 Z" fill="#cacaca"/><path d="M35 596 L35 592.8 L31.8 596 Z" fill="#e6e6e6"/><path d="M24.5 612.5 L30 618" stroke="#bcbcbc" stroke-width="3.2" stroke-linecap="round"/><circle cx="21" cy="608.8" r="4.6" fill="#7a7a7a" stroke="#c0c0c0" stroke-width="1.4"/><rect x="11.3" y="631.7" width="6.5" height="6.5" fill="#cfcfcf" stroke="#3a3a3a" stroke-width="0.6"/><rect x="8.3" y="628.6" width="6" height="6" fill="#1a1a1a" stroke="#c8c8c8" stroke-width="0.9"/><path d="M27.5 629.5 Q33 629.5 33.5 635" stroke="#d0d0d0" stroke-width="1.1" fill="none"/><path d="M26 629.5 L28.6 627.3 L28.6 631.7 Z M33.5 637 L31.3 634.4 L35.7 634.4 Z" fill="#d0d0d0"/><rect x="19" y="653.5" width="18.5" height="18.8" fill="#ffffff" stroke="#1e1e1e" stroke-width="0.8"/><rect x="9" y="644" width="18" height="18" fill="#000000" stroke="#ffffff" stroke-width="1.4"/><rect x="14.5" y="681.5" width="16.5" height="14" fill="#3a3a3a" stroke="#d8d8d8" stroke-width="1"/><rect x="14" y="694" width="18" height="2" fill="#535353"/><circle cx="22.7" cy="687.8" r="4.4" fill="none" stroke="#ececec" stroke-width="1.3" stroke-dasharray="1.2 1.56"/></svg>
<div class="a" style="left:40px;top:281px;width:164px;height:84px;background:#595959;border:1px solid #262626"></div>
<div class="a" style="left:41px;top:282px;width:162px;height:21px;background:#5a6a7f;border-top:1px solid #6a7a8c"></div>
<div class="a" style="left:49px;top:290px;width:4.5px;height:4.5px;background:#f2f2f2"></div>
<div class="lbl" style="left:84px;top:284.0px;color:#ffffff">画笔工具</div>
<div class="lbl" style="left:186px;top:285.0px;color:#ffffff;font-size:11px">B</div>
<div class="lbl" style="left:84px;top:303.0px;color:#ffffff">铅笔工具</div>
<div class="lbl" style="left:186px;top:304.0px;color:#ffffff;font-size:11px">B</div>
<div class="lbl" style="left:84px;top:322.0px;color:#ffffff">颜色替换工具</div>
<div class="lbl" style="left:186px;top:323.0px;color:#ffffff;font-size:11px">B</div>
<div class="lbl" style="left:84px;top:341.0px;color:#ffffff">混合器画笔工具</div>
<div class="lbl" style="left:186px;top:342.0px;color:#ffffff;font-size:11px">B</div>
<svg class="a" style="left:0;top:0" width="707" height="697"><path d="M79.5 287 L70.5 296.5" stroke="#262626" stroke-width="3.9000000000000004" stroke-linecap="round"/><path d="M79.5 287 L70.5 296.5" stroke="#c9c9c9" stroke-width="2.6" stroke-linecap="round"/><path d="M70.16 295.14 Q66.12 298.11 60.5 299 C64.52 302.32 71.36 302.06 71.13 299.02 Z" fill="#262626" stroke="#262626" stroke-width="0.9"/><path d="M70.16 295.14 Q66.12 298.11 60.5 299 C64.52 302.32 71.36 302.06 71.13 299.02 Z" fill="#c9c9c9"/><path d="M65 317.5 L75.5 307.5" stroke="#262626" stroke-width="5.2" stroke-linecap="round"/><path d="M66 316.5 L73 309.5" stroke="#9a9a9a" stroke-width="3.6"/><path d="M73.5 309 L76 306.6" stroke="#d0d0d0" stroke-width="3.6" stroke-linecap="round"/><path d="M63.3 319.5 L64.3 315.3 L67.4 318.4 Z" fill="#d8d8d8"/><rect x="62.2" y="327.2" width="4.6" height="4.6" fill="#8a8a8a" stroke="#d8d8d8" stroke-width="1"/><path d="M65 324.5 Q69.5 324 69.5 328.5" stroke="#d0d0d0" stroke-width="1" fill="none"/><path d="M63.5 324.5 L65.6 322.8 L65.6 326.2 Z M69.5 330 L67.8 328 L71.2 328 Z" fill="#d0d0d0"/><path d="M80.6 325.6 L73.6 333.2" stroke="#262626" stroke-width="3.9000000000000004" stroke-linecap="round"/><path d="M80.6 325.6 L73.6 333.2" stroke="#c9c9c9" stroke-width="2.6" stroke-linecap="round"/><path d="M73.01 331.93 Q70.17 335.36 65.5 337 C69.71 339.66 75.57 338.46 74.70 335.55 Z" fill="#262626" stroke="#262626" stroke-width="0.9"/><path d="M73.01 331.93 Q70.17 335.36 65.5 337 C69.71 339.66 75.57 338.46 74.70 335.55 Z" fill="#c9c9c9"/><path d="M66 342.5 Q64.5 346 63.2 347.2 A3 3 0 1 0 68.8 348.2 Q67.5 345.5 66 342.5 Z" fill="#bdbdbd"/><path d="M80.6 344.4 L73.4 352.2" stroke="#262626" stroke-width="3.9000000000000004" stroke-linecap="round"/><path d="M80.6 344.4 L73.4 352.2" stroke="#c9c9c9" stroke-width="2.6" stroke-linecap="round"/><path d="M72.75 350.96 Q69.94 354.58 65.2 356.5 C69.61 358.93 75.59 357.37 74.61 354.50 Z" fill="#262626" stroke="#262626" stroke-width="0.9"/><path d="M72.75 350.96 Q69.94 354.58 65.2 356.5 C69.61 358.93 75.59 357.37 74.61 354.50 Z" fill="#c9c9c9"/></svg>
<div class="a" style="left:560px;top:660px;font-size:18px;color:#f4f4f4;white-space:nowrap;text-shadow:0 0 2px #000,1px 1px 1px #000"><span style="-webkit-text-stroke:0.8px #f4f4f4">头条</span> @路过美丫</div>
</body></html>
